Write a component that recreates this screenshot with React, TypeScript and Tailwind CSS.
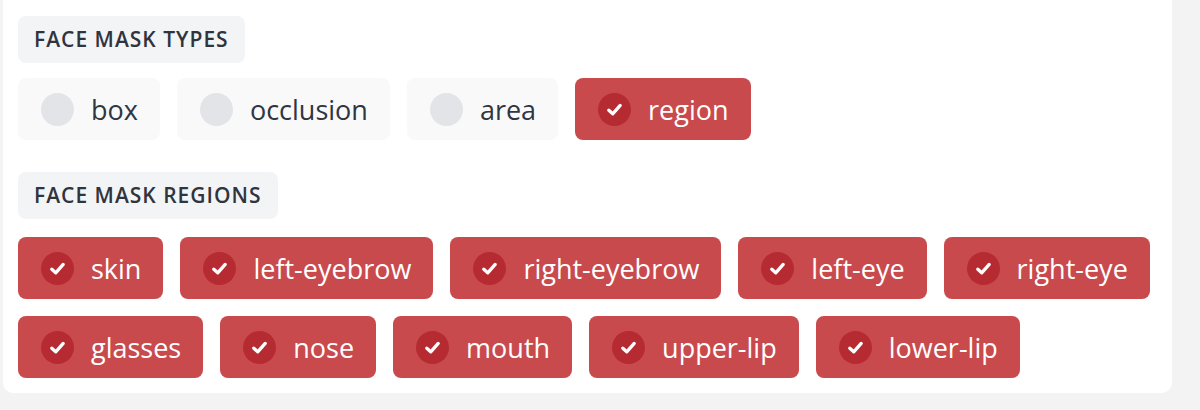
import React from 'react';

const TYPES: Array<[string, boolean]> = [
  ['box', false],
  ['occlusion', false],
  ['area', false],
  ['region', true],
];

const REGIONS = [
  'skin', 'left-eyebrow', 'right-eyebrow', 'left-eye', 'right-eye',
  'glasses', 'nose', 'mouth', 'upper-lip', 'lower-lip',
];

function Check() {
  return (
    <svg viewBox="0 0 16 16" className="h-[19px] w-[19px]" fill="none" aria-hidden>
      <path d="M3.2 8.6 L6.5 11.6 L12.8 4.6" stroke="white" strokeWidth="2.8" strokeLinecap="round" strokeLinejoin="round" />
    </svg>
  );
}

function Chip({ label, checked }: { label: string; checked: boolean }) {
  return (
    <label
      className={`flex h-[62px] cursor-pointer items-center gap-[17px] rounded-[8px] pl-[23px] pr-[22px] text-[27px] ${
        checked ? 'bg-[#c94a4d] text-white' : 'bg-[#f9f9fa] text-[#2f3542]'
      }`}
    >
      <span
        className={`flex h-[33px] w-[33px] shrink-0 items-center justify-center rounded-full ${
          checked ? 'bg-[#b52b31]' : 'bg-[#e3e4e7]'
        }`}
      >
        {checked && <Check />}
      </span>
      <span className="leading-none">{label}</span>
    </label>
  );
}

function SectionLabel({ children }: { children: React.ReactNode }) {
  return (
    <div className="flex h-[47px] w-fit items-center rounded-[8px] bg-[#f3f4f6] px-4 text-[21px] font-semibold uppercase tracking-[1px] text-[#30343f]">
      {children}
    </div>
  );
}

export default function App() {
  return (
    <div className="h-[410px] w-[1200px] bg-[#f3f3f4] pl-[3px] font-['Open_Sans',sans-serif]">
      <div className="flex h-[393px] w-[1169px] flex-col rounded-b-[10px] bg-white px-[15px] pt-[16px]">
        <SectionLabel>Face Mask Types</SectionLabel>
        <div className="mt-[15px] flex flex-wrap gap-[17px]">
          {TYPES.map(([t, c]) => <Chip key={t} label={t} checked={c} />)}
        </div>
        <div className="mt-[32px]">
          <SectionLabel>Face Mask Regions</SectionLabel>
        </div>
        <div className="mt-[18px] flex w-[1140px] flex-wrap gap-[17px]">
          {REGIONS.map((r) => <Chip key={r} label={r} checked />)}
        </div>
      </div>
    </div>
  );
}
